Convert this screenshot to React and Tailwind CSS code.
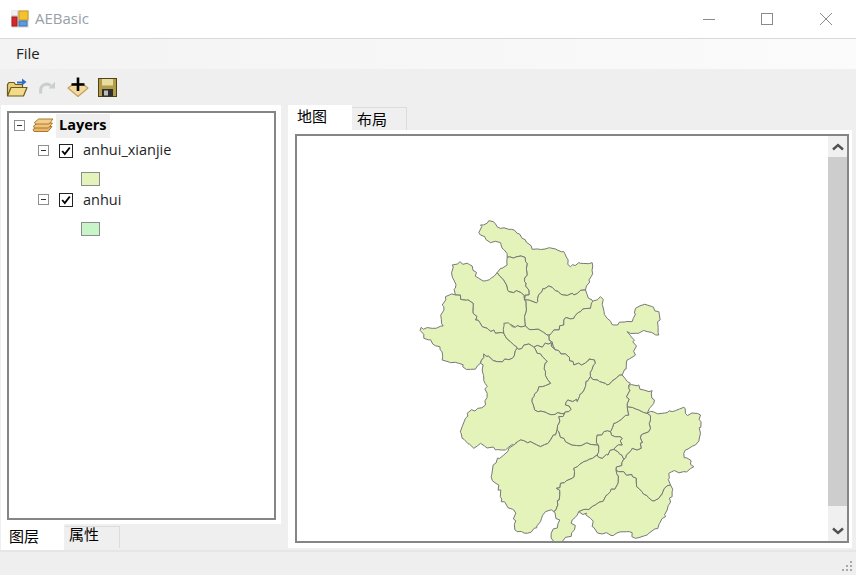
const zoomA = {
  north: [[240,45],[265,32],[285,42],[300,55],[325,58],[350,70],[365,85],[395,118],[440,115],[470,120],[490,125],[503,150],[510,170],[535,158],[575,158],[572,200],[555,240],[520,255],[480,252],[445,228],[428,235],[412,275],[382,270],[372,270],[385,240],[372,215],[380,195],[380,160],[362,138],[320,142],[300,98],[270,98],[240,75]],
  huaibei: [[320,142],[362,138],[380,160],[380,195],[372,215],[385,240],[372,270],[362,248],[325,245],[318,225],[305,205],[290,188],[320,165]],
  bozhou: [[155,165],[178,155],[215,168],[235,205],[258,212],[290,188],[305,205],[318,225],[325,245],[362,248],[372,270],[378,300],[372,320],[375,348],[345,352],[315,340],[310,370],[285,370],[260,355],[225,330],[218,280],[165,255],[160,210]],
  fuyang: [[135,260],[165,255],[218,280],[225,330],[260,355],[285,370],[310,370],[330,395],[350,415],[335,445],[290,455],[250,432],[240,460],[210,478],[175,460],[150,458],[125,450],[118,410],[85,390],[70,385],[62,352],[95,355],[128,348],[125,285]],
  bengbu: [[372,270],[382,270],[412,275],[428,235],[445,228],[480,252],[520,255],[555,240],[575,270],[570,295],[540,305],[520,325],[490,330],[490,345],[460,360],[440,375],[375,348],[372,320],[378,300]],
  chuzhou: [[600,260],[620,325],[640,345],[695,335],[705,295],[740,285],[775,305],[775,375],[740,365],[680,365],[702,390],[705,435],[680,450],[665,495],[620,525],[570,500],[582,450],[520,465],[495,432],[465,420],[445,378],[460,360],[490,345],[490,330],[520,325],[540,305],[570,295],[580,272]],
  huainan: [[310,340],[345,352],[375,348],[440,375],[445,378],[465,420],[452,398],[400,412],[385,402],[355,418],[350,415],[330,395],[310,370]],
  hefei: [[400,412],[452,398],[465,420],[495,432],[520,465],[582,450],[570,500],[530,575],[528,568],[502,570],[495,585],[512,598],[505,605],[440,610],[412,605],[395,565],[415,530],[450,520],[435,485],[440,455],[410,430]],
  luan: [[240,460],[250,432],[290,455],[335,445],[350,415],[355,418],[385,402],[400,412],[410,430],[440,455],[435,485],[450,520],[415,530],[395,565],[412,605],[440,610],[505,605],[475,620],[470,660],[450,690],[420,710],[390,695],[360,690],[315,720],[285,720],[240,700],[220,715],[185,685],[185,650],[200,610],[255,585],[260,550],[245,480]],
};
const zoomB = {
  anqing: [[160,255],[175,235],[210,210],[240,215],[270,230],[300,210],[320,180],[345,215],[365,225],[405,220],[445,228],[440,255],[400,275],[370,295],[365,325],[330,340],[318,355],[328,375],[310,425],[285,425],[270,455],[230,490],[200,485],[190,420],[152,395],[145,345],[122,320],[128,285]],
  chizhou: [[370,295],[400,275],[440,255],[455,265],[490,238],[520,268],[497,300],[500,345],[470,375],[435,405],[385,425],[365,450],[372,480],[335,515],[310,515],[302,490],[328,450],[310,425],[328,375],[318,355],[330,340],[365,325]],
  huangshan: [[497,300],[520,305],[558,325],[565,355],[605,392],[625,385],[660,345],[665,380],[650,420],[625,465],[590,495],[555,505],[545,488],[455,492],[425,470],[420,445],[385,425],[435,405],[470,375],[500,345]],
  xuancheng: [[590,130],[650,128],[700,112],[705,130],[750,135],[750,190],[735,225],[700,250],[730,290],[700,305],[655,310],[660,345],[625,385],[605,392],[565,355],[558,325],[520,305],[497,300],[520,268],[545,235],[572,235],[572,195],[600,175],[600,150]],
  wuhu: [[530,110],[565,120],[590,130],[600,150],[600,175],[572,195],[572,235],[545,235],[520,268],[490,238],[515,225],[515,205],[480,185],[490,160],[535,135]],
  tongling: [[440,195],[460,185],[480,185],[515,205],[515,225],[490,238],[455,265],[440,255],[445,228]],
  maanshan: [[535,45],[565,45],[580,60],[605,62],[612,90],[590,130],[565,120],[530,110]],
  chaohu: [[420,20],[470,45],[515,15],[540,40],[535,45],[530,110],[535,135],[490,160],[480,185],[460,185],[440,195],[445,228],[405,220],[365,225],[345,215],[320,180],[325,140],[355,125],[362,118],[345,105],[352,90],[378,88],[380,95]],
};

function noise(a, b) {
  const s = Math.sin(a * 12.9898 + b * 78.233) * 43758.5453;
  return s - Math.floor(s) - 0.5;
}

// Each edge is subdivided in a canonical direction, so the two regions that
// share an edge get the same jagged border.
function edge(p, q, amount) {
  const forward = p[0] < q[0] || (p[0] === q[0] && p[1] < q[1]);
  const a = forward ? p : q;
  const b = forward ? q : p;
  const len = Math.hypot(b[0] - a[0], b[1] - a[1]);
  const n = Math.max(1, Math.round(len / 11));
  const pts = [];
  for (let i = 1; i < n; i++) {
    const t = i / n;
    const x = a[0] + (b[0] - a[0]) * t;
    const y = a[1] + (b[1] - a[1]) * t;
    pts.push([x + noise(x, y) * amount, y + noise(y + 3, x) * amount]);
  }
  return forward ? pts : pts.reverse();
}

function roughen(points, amount) {
  const out = [];
  points.forEach((p, i) => {
    out.push(p);
    out.push(...edge(p, points[(i + 1) % points.length], amount));
  });
  return out.map((p) => p.map((v) => v.toFixed(1)).join(",")).join(" ");
}

const regions = [
  ...Object.values(zoomA),
  ...Object.values(zoomB).map((pts) => pts.map(([x, y]) => [x + 150, y + 480])),
];

function AnhuiMap() {
  return (
    <svg viewBox="0 0 530 405" className="block w-full h-full">
      <g transform="translate(103,74) scale(0.3333)" fill="#e3f3b9" stroke="#777777" strokeWidth="3" strokeLinejoin="miter" strokeMiterlimit="2">
        {regions.map((pts, i) => (
          <polygon key={i} points={roughen(pts, 12)} />
        ))}
      </g>
    </svg>
  );
}

function AppIcon() {
  return (
    <svg width="18" height="18" viewBox="0 0 18 18">
      <rect x="0.5" y="0.5" width="17" height="17" fill="#d4d4d4" />
      <rect x="8" y="1" width="9" height="9" fill="#f5c22a" stroke="#c8962a" />
      <rect x="1" y="7" width="5" height="9" fill="#d8262c" stroke="#9c2020" />
      <rect x="8" y="11" width="8" height="5" fill="#5b9be0" stroke="#3f74b8" />
      <rect x="1" y="1" width="5" height="4" fill="#f2f2f2" />
    </svg>
  );
}

function FolderIcon() {
  return (
    <svg width="22" height="22" viewBox="0 0 22 22">
      <path d="M1.5 20V8.5L3 6.5h5l1.5 2h7V12" fill="#e6cf78" stroke="#6e5a1c" strokeWidth="1.2" />
      <path d="M1.5 20L5 11.5h16L17.5 20Z" fill="#f2dc8c" stroke="#6e5a1c" strokeWidth="1.2" strokeLinejoin="round" />
      <path d="M11 5.5h5V2.5l4.5 3.5L16 9.5V7.5h-5Z" fill="#2a6fc4" />
    </svg>
  );
}

function RedoIcon() {
  return (
    <svg width="18" height="18" viewBox="0 0 18 18">
      <path d="M3 15.5C1 8 7 4 13 7.5" fill="none" stroke="#c9cfcf" strokeWidth="3" />
      <path d="M10.5 10.5H17V3.5Z" fill="#c9cfcf" />
    </svg>
  );
}

function AddDataIcon() {
  return (
    <svg width="22" height="22" viewBox="0 0 22 22">
      <path d="M1 12L7 7.5H15L21 12L11 20.5Z" fill="#f3d9a0" stroke="#c2a15c" strokeWidth="1.2" strokeLinejoin="round" />
      <path d="M11 1.5V15M4.5 8.5H17.5" stroke="#000" strokeWidth="2.6" />
    </svg>
  );
}

function SaveIcon() {
  return (
    <svg width="19" height="19" viewBox="0 0 19 19">
      <rect x="0.5" y="0.5" width="18" height="18" fill="#b39c48" stroke="#4c431c" />
      <rect x="4" y="1" width="11" height="6.5" fill="#e8dca0" />
      <rect x="4" y="11" width="11" height="7.5" fill="#2f2f2f" />
      <rect x="6" y="12.5" width="4" height="5" fill="#bdbdbd" />
    </svg>
  );
}

function LayersIcon() {
  return (
    <svg width="22" height="15" viewBox="0 0 22 15">
      <path d="M1 11.5L5 8.5H20L16 13.5H2Z" fill="#eab768" stroke="#a87a30" />
      <path d="M1.5 8L5.5 5H20.5L16.5 10H2.5Z" fill="#f0c27a" stroke="#a87a30" />
      <path d="M2.5 4.5L6.5 1H21L17 6H3.5Z" fill="#f5cd8a" stroke="#a87a30" />
    </svg>
  );
}

function Expander() {
  return (
    <span className="flex items-center justify-center w-[11px] h-[11px] border border-[#8f8f8f] bg-white shrink-0">
      <span className="block w-[5px] h-px bg-[#333333]" />
    </span>
  );
}

function Check() {
  return (
    <span className="flex items-center justify-center w-[14px] h-[14px] border border-[#222222] bg-white shrink-0">
      <svg width="10" height="10" viewBox="0 0 10 10">
        <path d="M1.2 5L3.8 8L8.8 1.5" fill="none" stroke="#000" strokeWidth="1.9" />
      </svg>
    </span>
  );
}

function Swatch({ color }) {
  return <span className={`block w-[19px] h-[14px] border border-[#8c8c8c] ${color}`} />;
}

function Chevron({ down }) {
  return (
    <svg width="12" height="8" viewBox="0 0 12 8">
      <path d={down ? "M1 1.5L6 6L11 1.5" : "M1 6.5L6 2L11 6.5"} fill="none" stroke="#505050" strokeWidth="2.4" />
    </svg>
  );
}

export default function App() {
  const sans = "font-['Open_Sans','Noto_Sans_CJK_SC',sans-serif]";
  const cjk = "font-['Noto_Sans_CJK_SC',sans-serif]";
  return (
    <div className={`w-[856px] h-[575px] flex flex-col bg-[#efefef] overflow-hidden text-black ${sans}`}>
      <div className="h-[39px] shrink-0 bg-white border-b border-[#d9d9d9] flex items-center">
        <div className="ml-[11px] mr-[6px] flex"><AppIcon /></div>
        <span className="text-[15px] text-[#98a0a8] pb-[2px]">AEBasic</span>
        <div className="ml-auto flex items-center">
          <svg width="14" height="14" viewBox="0 0 14 14" className="mr-[44px]"><path d="M1 7.5H13" stroke="#8a8a8a" /></svg>
          <svg width="14" height="14" viewBox="0 0 14 14" className="mr-[45px]"><rect x="1.5" y="1.5" width="11" height="11" fill="none" stroke="#8a8a8a" /></svg>
          <svg width="14" height="14" viewBox="0 0 14 14" className="mr-[23px]"><path d="M1 1L13 13M13 1L1 13" stroke="#8a8a8a" /></svg>
        </div>
      </div>

      <div className="h-[30px] shrink-0 bg-linear-to-r from-[#f3f3f3] to-[#fbfbfb] flex items-center pl-[16px]">
        <span className="text-[15px] text-[#222222] pb-[2px]">File</span>
      </div>

      <div className="h-[36px] shrink-0 flex items-center pl-[6px]">
        <span className="flex w-[22px]"><FolderIcon /></span>
        <span className="flex ml-[10px] w-[18px]"><RedoIcon /></span>
        <span className="flex ml-[11px] w-[22px]"><AddDataIcon /></span>
        <span className="flex ml-[9px] w-[19px]"><SaveIcon /></span>
      </div>

      <div className="flex-1 flex min-h-0 pl-[1px]">
        <div className="w-[280px] flex flex-col">
          <div className="h-[419px] bg-white pt-[6px] pl-[6px] pr-[5px] pb-[4px]">
            <div className="h-full border-2 border-[#858585] pl-[5px] text-[14.5px] text-[#1f1f1f]">
              <div className="h-[25px] flex items-center">
                <Expander />
                <span className="ml-[7px] flex"><LayersIcon /></span>
                <span className="ml-[2px] h-[24px] px-[3px] pb-[2px] bg-[#efefef] font-bold flex items-center text-black">Layers</span>
              </div>
              <div className="h-[25px] flex items-center pl-[24px]">
                <Expander />
                <span className="ml-[10px] flex"><Check /></span>
                <span className="ml-[10px] pb-[2px]">anhui_xianjie</span>
              </div>
              <div className="h-[24px] flex items-end pl-[67px] pb-[1px]">
                <Swatch color="bg-[#e3f3b9]" />
              </div>
              <div className="h-[25px] flex items-center pl-[24px]">
                <Expander />
                <span className="ml-[10px] flex"><Check /></span>
                <span className="ml-[10px]">anhui</span>
              </div>
              <div className="h-[25px] flex items-end pl-[67px] pb-[1px]">
                <Swatch color="bg-[#c8f5c8]" />
              </div>
            </div>
          </div>
          <div className={`flex items-start ${cjk} text-[15px] leading-none`}>
            <div className="w-[63px] h-[26px] bg-white flex items-end pb-[7px] pl-[8px]">图层</div>
            <div className="ml-[1px] w-[55px] h-[22px] mt-[2px] border-t border-r border-[#dcdcdc] pl-[4px] leading-[13px]">属性</div>
          </div>
        </div>

        <div className="ml-[7px] w-[564px] flex flex-col h-[443px]">
          <div className={`flex items-end h-[25px] shrink-0 ${cjk} text-[15px] leading-none`}>
            <div className="w-[64px] h-[25px] bg-white flex items-center pl-[9px] pb-[4px]">地图</div>
            <div className="w-[55px] h-[23px] border-t border-r border-[#dcdcdc] flex items-center pl-[5px] pb-[2px]">布局</div>
          </div>
          <div className="flex-1 min-h-0 bg-white pt-[4px] pl-[7px] pr-[3px] pb-[5px]">
            <div className="h-full border-2 border-[#858585] flex bg-white">
              <div className="flex-1 min-w-0"><AnhuiMap /></div>
              <div className="w-[19px] bg-[#f0f0f0] flex flex-col shrink-0">
                <div className="h-[21px] flex items-center justify-center"><Chevron /></div>
                <div className="flex-1 bg-[#cdcdcd]" />
                <div className="h-[35px] flex items-end justify-center pb-[6px]"><Chevron down /></div>
              </div>
            </div>
          </div>
        </div>
      </div>

      <div className="h-[25px] shrink-0 border-t-2 border-[#e6e6e6] flex justify-end items-end pr-[3px] pb-[2px]">
        <svg width="12" height="12" viewBox="0 0 12 12" fill="#a8a8a8">
          <rect x="9" y="0" width="2" height="2" />
          <rect x="5" y="4" width="2" height="2" />
          <rect x="9" y="4" width="2" height="2" />
          <rect x="1" y="8" width="2" height="2" />
          <rect x="5" y="8" width="2" height="2" />
          <rect x="9" y="8" width="2" height="2" />
        </svg>
      </div>
    </div>
  );
}
